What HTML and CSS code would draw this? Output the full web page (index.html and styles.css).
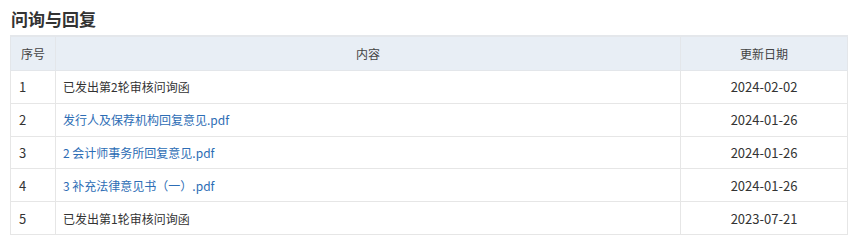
FILE: index.html
```html
<!DOCTYPE html>
<html lang="zh">
<head>
<meta charset="utf-8">
<link rel="stylesheet" href="styles.css">
</head>
<body>
<div class="panel">
  <h2 class="title">问询与回复</h2>
  <table class="grid">
    <colgroup>
      <col class="c-no">
      <col class="c-content">
      <col class="c-date">
    </colgroup>
    <thead>
      <tr><th>序号</th><th>内容</th><th>更新日期</th></tr>
    </thead>
    <tbody>
      <tr><td>1</td><td class="left">已发出第2轮审核问询函</td><td class="date">2024-02-02</td></tr>
      <tr><td>2</td><td class="left"><a class="link">发行人及保荐机构回复意见.pdf</a></td><td class="date">2024-01-26</td></tr>
      <tr><td>3</td><td class="left"><a class="link">2 会计师事务所回复意见.pdf</a></td><td class="date">2024-01-26</td></tr>
      <tr><td>4</td><td class="left"><a class="link">3 补充法律意见书（一）.pdf</a></td><td class="date">2024-01-26</td></tr>
      <tr><td>5</td><td class="left">已发出第1轮审核问询函</td><td class="date">2023-07-21</td></tr>
    </tbody>
  </table>
</div>
</body>
</html>
```
FILE: styles.css
```css
html, body {
  margin: 0;
  padding: 0;
  background: #ffffff;
}
body {
  font-family: "Noto Sans CJK SC", "Noto Sans", sans-serif;
  color: #333333;
}
.panel {
  padding: 8px 17px 0 10px;
}
.title {
  margin: 0 0 5px 1px;
  font-size: 17px;
  line-height: 22px;
  font-weight: 700;
  color: #333333;
}
.grid {
  width: 838px;
  border-collapse: collapse;
  border-top: 2px solid #e4e7eb;
  font-size: 12px;
}
.c-no { width: 45px; }
.c-date { width: 167px; }
.grid th {
  background: #e8eef5;
  font-weight: 400;
  color: #444444;
  height: 33px;
  padding: 0;
  border: 1px solid #e3e6ea;
  text-align: center;
}
.grid td {
  height: 31.8px;
  padding: 0;
  border: 1px solid #e6e6e6;
  text-align: center;
}
.grid td:first-child {
  text-align: left;
  padding-left: 8px;
  font-size: 13px;
}
.grid td.left {
  text-align: left;
  padding-left: 7px;
}
.grid td.date {
  font-size: 13px;
}
.link {
  color: #2d6db5;
  text-decoration: none;
}
```
